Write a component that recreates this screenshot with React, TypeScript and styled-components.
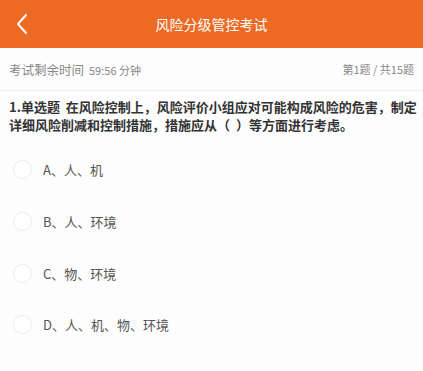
import React from "react";
import styled, { createGlobalStyle } from "styled-components";

const Global = createGlobalStyle`
  html, body { margin: 0; padding: 0; background: #fdfdfd; }
  body { font-family: "Noto Sans CJK SC", "Noto Sans", sans-serif; }
  * { box-sizing: border-box; }
`;

const Page = styled.div`
  width: 423px;
  height: 371px;
  background: #fdfdfd;
  display: flex;
  flex-direction: column;
`;

const Header = styled.div`
  height: 48px;
  background: #ed6a24;
  display: grid;
  grid-template-columns: 48px 1fr 48px;
  align-items: center;
`;

const Back = styled.div`
  display: flex;
  align-items: center;
  justify-content: center;
  padding-right: 4px;
`;

const Title = styled.div`
  color: #fff;
  font-size: 14px;
  text-align: center;
`;

const InfoBar = styled.div`
  height: 43px;
  border-bottom: 1px solid #f0f0f0;
  background: #fdfdfd;
  display: flex;
  align-items: center;
  justify-content: space-between;
  padding: 0 9px 0 9px;
  color: #888;
`;

const Timer = styled.div`
  font-size: 12.5px;
  display: flex;
  align-items: baseline;
  gap: 5px;
`;

const Small = styled.span`
  font-size: 11px;
`;

const Progress = styled.div`
  font-size: 11px;
  color: #888;
`;

const Question = styled.div`
  padding: 7px 2px 0 9px;
  font-size: 13px;
  font-weight: bold;
  line-height: 18px;
  color: #333;
`;

const Options = styled.div`
  display: flex;
  flex-direction: column;
  padding-top: 10px;
`;

const Option = styled.div`
  height: 51.7px;
  display: flex;
  align-items: center;
  padding-left: 13px;
  gap: 11px;
`;

const Radio = styled.div`
  width: 19px;
  height: 19px;
  border-radius: 50%;
  border: 1.5px solid #ececec;
  background: #fff;
`;

const Label = styled.div`
  font-size: 13px;
  color: #555;
`;

const options = ["A、人、机", "B、人、环境", "C、物、环境", "D、人、机、物、环境"];

export default function App() {
  return (
    <Page>
      <Global />
      <Header>
        <Back>
          <svg width="14" height="22" viewBox="0 0 14 22">
            <path d="M11 2 L3 11 L11 20" fill="none" stroke="#fff" strokeWidth="2" strokeLinecap="round" strokeLinejoin="round" />
          </svg>
        </Back>
        <Title>风险分级管控考试</Title>
        <div />
      </Header>
      <InfoBar>
        <Timer>
          考试剩余时间<Small>59:56 分钟</Small>
        </Timer>
        <Progress>第1题 / 共15题</Progress>
      </InfoBar>
      <Question>
        1.单选题&nbsp;&nbsp;在风险控制上，风险评价小组应对可能构成风险的危害，制定详细风险削减和控制措施，措施应从（&nbsp;&nbsp;）等方面进行考虑。
      </Question>
      <Options>
        {options.map((o) => (
          <Option key={o}>
            <Radio />
            <Label>{o}</Label>
          </Option>
        ))}
      </Options>
    </Page>
  );
}
